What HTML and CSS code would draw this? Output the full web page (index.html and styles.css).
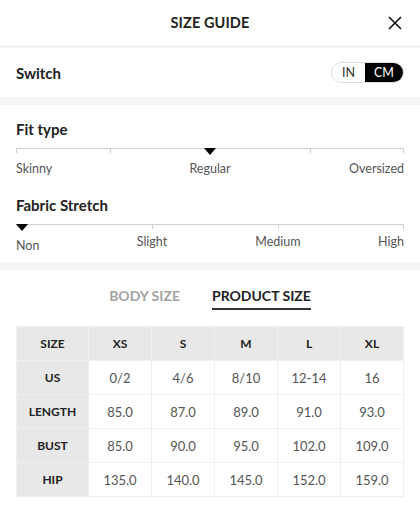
FILE: index.html
```html
<!DOCTYPE html>
<html>
<head>
<meta charset="utf-8">
<link rel="stylesheet" href="styles.css">
</head>
<body>
<div class="page">
  <header class="header">
    <div class="title">SIZE GUIDE</div>
    <button class="close" aria-label="Close">
      <svg width="14" height="14" viewBox="0 0 14 14"><path d="M1 1L13 13M13 1L1 13" stroke="#111" stroke-width="1.6" fill="none"/></svg>
    </button>
  </header>
  <div class="divider thin"></div>
  <div class="switch-row">
    <div class="label">Switch</div>
    <div class="toggle">
      <span class="seg in">IN</span>
      <span class="seg cm active">CM</span>
    </div>
  </div>
  <div class="divider"></div>
  <section class="fit">
    <div class="label">Fit type</div>
    <div class="scale fit-scale">
      <div class="track">
        <span class="tick" style="left:0%"></span>
        <span class="tick" style="left:24.2%"></span>
        <span class="tick" style="left:75.8%"></span>
        <span class="tick end" style="left:100%"></span>
        <span class="pointer" style="left:50%"></span>
      </div>
      <div class="marks">
        <span class="mark first">Skinny</span>
        <span class="mark mid" style="left:50%">Regular</span>
        <span class="mark last">Oversized</span>
      </div>
    </div>
    <div class="label second">Fabric Stretch</div>
    <div class="scale stretch-scale">
      <div class="track">
        <span class="tick" style="left:35.05%"></span>
        <span class="tick" style="left:67.5%"></span>
        <span class="tick end" style="left:100%"></span>
        <span class="pointer start" style="left:0%"></span>
      </div>
      <div class="marks">
        <span class="mark first low">Non</span>
        <span class="mark mid" style="left:35.05%">Slight</span>
        <span class="mark mid" style="left:67.5%">Medium</span>
        <span class="mark last">High</span>
      </div>
    </div>
  </section>
  <div class="divider"></div>
  <section class="sizes">
    <div class="tabs">
      <span class="tab">BODY SIZE</span>
      <span class="tab active">PRODUCT SIZE</span>
    </div>
    <table class="size-table">
      <tr class="head"><th>SIZE</th><th>XS</th><th>S</th><th>M</th><th>L</th><th>XL</th></tr>
      <tr><th>US</th><td>0/2</td><td>4/6</td><td>8/10</td><td>12-14</td><td>16</td></tr>
      <tr><th>LENGTH</th><td>85.0</td><td>87.0</td><td>89.0</td><td>91.0</td><td>93.0</td></tr>
      <tr><th>BUST</th><td>85.0</td><td>90.0</td><td>95.0</td><td>102.0</td><td>109.0</td></tr>
      <tr><th>HIP</th><td>135.0</td><td>140.0</td><td>145.0</td><td>152.0</td><td>159.0</td></tr>
    </table>
  </section>
</div>
</body>
</html>
```

FILE: styles.css
```css
* { box-sizing: border-box; }
html, body { margin: 0; padding: 0; background: #fff; }
body {
  font-family: Lato, "Noto Sans", "DejaVu Sans", sans-serif;
  color: #222;
  width: 420px;
  overflow: hidden;
}
.page { width: 420px; }

.header {
  height: 45px;
  display: flex;
  align-items: center;
  justify-content: center;
  position: relative;
}
.title {
  font-size: 14.5px;
  font-weight: 700;
  letter-spacing: 0.1px;
  color: #222;
}
.close {
  position: absolute;
  right: 18px;
  top: 16px;
  width: 14px;
  height: 14px;
  padding: 0;
  border: 0;
  background: none;
  display: flex;
}

.divider { height: 8px; background: #f5f5f5; }
.divider.thin { height: 3px; }

.switch-row {
  height: 49px;
  display: flex;
  align-items: center;
  justify-content: space-between;
  padding: 0 16px;
}
.label {
  font-size: 15px;
  line-height: 20px;
  font-weight: 700;
  color: #222;
}
.toggle {
  display: flex;
  height: 21px;
  border: 1px solid #dcdcdc;
  border-radius: 11px;
  overflow: hidden;
  margin-top: -1px;
}
.seg {
  display: flex;
  align-items: center;
  justify-content: center;
  font-size: 12.5px;
  color: #333;
}
.seg.in { width: 33px; }
.seg.cm { width: 38px; }
.seg.active { background: #000; color: #fff; }

.fit { padding: 14px 16px 0; height: 157px; }
.fit .label.second { margin-top: 18px; }

.scale { margin-top: 9px; }
.track {
  position: relative;
  height: 1px;
  background: #d0d0d0;
}
.tick {
  position: absolute;
  top: 0;
  width: 1px;
  height: 5px;
  background: #d0d0d0;
}
.tick.end { margin-left: -1px; }
.pointer {
  position: absolute;
  top: 0;
  width: 0;
  height: 0;
  margin-left: -6px;
  border-left: 6px solid transparent;
  border-right: 6px solid transparent;
  border-top: 7px solid #000;
}
.pointer.start { margin-left: 0; }

.marks {
  position: relative;
  height: 16px;
  margin-top: 12px;
}
.stretch-scale .marks { margin-top: 9px; }
.mark {
  position: absolute;
  top: 0;
  font-size: 12.5px;
  line-height: 16px;
  color: #555;
  white-space: nowrap;
}
.mark.first { left: 0; }
.mark.last { right: 0; }
.mark.mid { transform: translateX(-50%); }
.mark.low { top: 4px; }

.sizes { padding: 17px 16px 0; }
.tabs {
  display: flex;
  justify-content: center;
  gap: 32px;
}
.tab {
  font-size: 14px;
  line-height: 18px;
  font-weight: 700;
  color: #a3a3a3;
  padding-bottom: 3px;
  border-bottom: 2px solid transparent;
}
.tab.active { color: #222; border-bottom-color: #333; }

.size-table {
  margin-top: 16px;
  width: 388px;
  border-collapse: collapse;
  table-layout: fixed;
}
.size-table th, .size-table td {
  height: 34px;
  padding: 0;
  text-align: center;
  border: 1px solid #f0f0f0;
}
.size-table th {
  background: #e8e8e8;
  font-size: 12px;
  font-weight: 700;
  color: #222;
}
.size-table th:first-child { width: 72px; }
.size-table td {
  font-size: 13px;
  color: #555;
}
```
